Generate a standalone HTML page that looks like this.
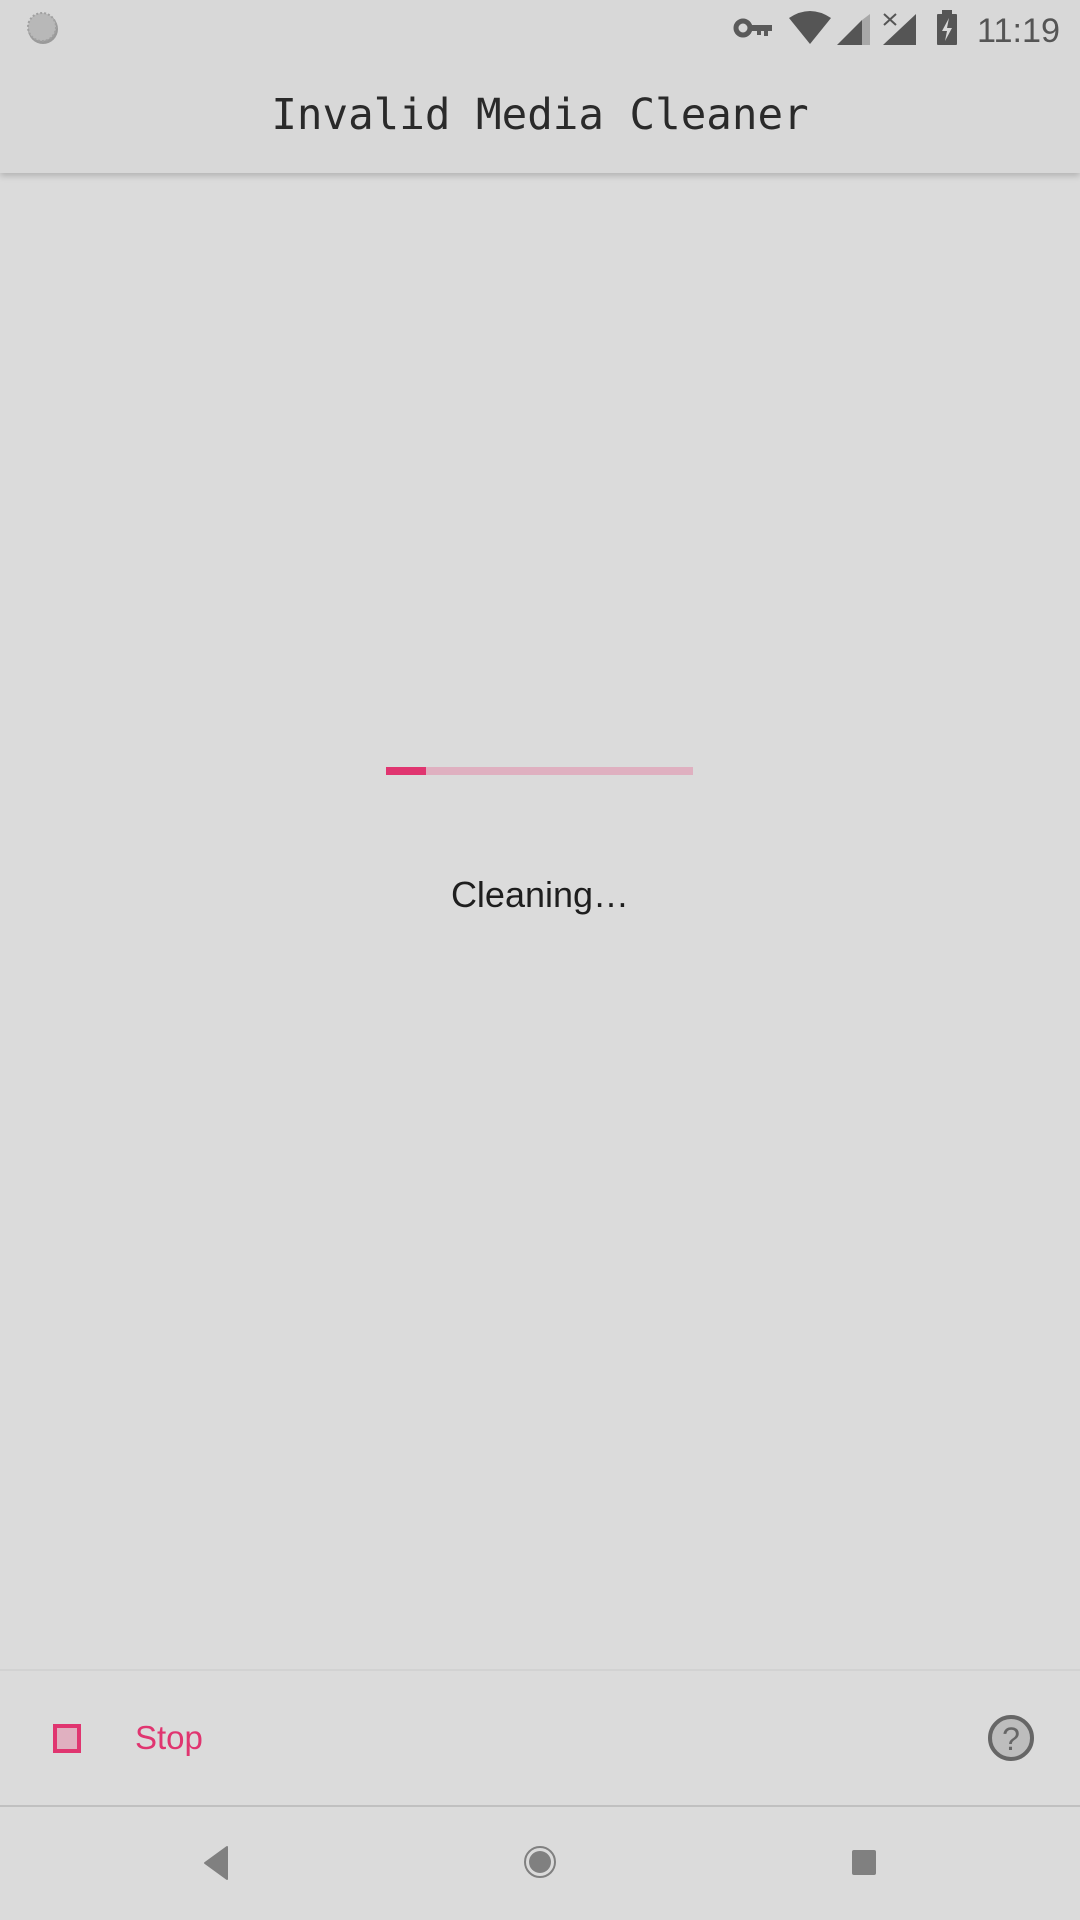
<!DOCTYPE html>
<html><head><meta charset="utf-8"><style>
body{margin:0;width:1080px;height:1920px;background:#dbdbdb;position:relative;overflow:hidden;font-family:"Liberation Sans",sans-serif}
.abs{position:absolute}
</style></head><body>
<div class="abs" style="left:0;top:0;width:1080px;height:173px;background:#d8d8d8;box-shadow:0 3px 6px rgba(0,0,0,0.18)"></div>
<svg class="abs" style="left:0;top:0" width="1080" height="60">
<circle cx="43" cy="29" r="15" fill="#9a9a9a"/><circle cx="42" cy="27" r="14" fill="#b8b8b8" stroke="#a0a0a0" stroke-width="2" stroke-dasharray="2 2"/>
<circle cx="743" cy="28" r="7" fill="none" stroke="#5a5a5a" stroke-width="5"/>
<path d="M750 25h22v6h-4v5h-4v-5h-3v4h-4v-4h-7z" fill="#5a5a5a"/>
<path d="M789 18 Q810 4 831 18 L810 44 Z" fill="#555"/>
<path d="M837 45 L862 20 V45 Z" fill="#555"/><path d="M862 20 L870 14 V45 H862 Z" fill="#a8a8a8"/>
<path d="M883 45 L916 14 V45 Z" fill="#555"/>
<path d="M884 14 L896 25 M896 14 L884 25" stroke="#555" stroke-width="2"/>
<rect x="937" y="14" width="20" height="31" rx="1" fill="#555"/><rect x="942" y="10" width="10" height="5" fill="#555"/>
<path d="M949 18 L942 31 H947 L945 41 L952 28 H947 Z" fill="#d8d8d8"/>
<text x="1060" y="42" text-anchor="end" font-family="Liberation Sans" font-size="34" fill="#555" textLength="83" lengthAdjust="spacingAndGlyphs">11:19</text>
</svg>
<div class="abs" style="left:0;width:1080px;top:88px;text-align:center;font-family:'DejaVu Sans Mono','Liberation Mono',monospace;font-size:42.5px;color:#2a2a2a;line-height:56px">Invalid Media Cleaner</div>
<div class="abs" style="left:386px;top:767px;width:307px;height:8px;background:#dfb0c0"></div>
<div class="abs" style="left:386px;top:767px;width:40px;height:8px;background:#e03570"></div>
<div class="abs" style="left:0;top:871px;width:1080px;text-align:center;font-size:36px;color:#1e1e1e;line-height:48px">Cleaning…</div>
<div class="abs" style="left:0;top:1669px;width:1080px;height:2px;background:#d2d2d2"></div>
<div class="abs" style="left:53px;top:1724px;width:20px;height:21px;border:4px solid #e03570;background:#e0b0c0"></div>
<div class="abs" style="left:135px;top:1718px;font-size:33px;color:#e03570;line-height:40px">Stop</div>
<svg class="abs" style="left:980px;top:1707px" width="64" height="64">
<circle cx="31" cy="31" r="21" fill="#bdbdbd" stroke="#666" stroke-width="4"/>
<text x="31" y="43" text-anchor="middle" font-size="32" font-family="Liberation Sans" fill="#666">?</text>
</svg>
<div class="abs" style="left:0;top:1805px;width:1080px;height:2px;background:#c0c0c0"></div>
<svg class="abs" style="left:0;top:1807px" width="1080" height="113">
<path d="M227 40 V72 L205 56 Z" fill="#808080" stroke="#808080" stroke-width="2" stroke-linejoin="round"/>
<circle cx="540" cy="55" r="15" fill="none" stroke="#808080" stroke-width="2"/>
<circle cx="540" cy="55" r="11" fill="#808080"/>
<rect x="852" y="43" width="24" height="25" rx="2" fill="#808080"/>
</svg>
</body></html>
